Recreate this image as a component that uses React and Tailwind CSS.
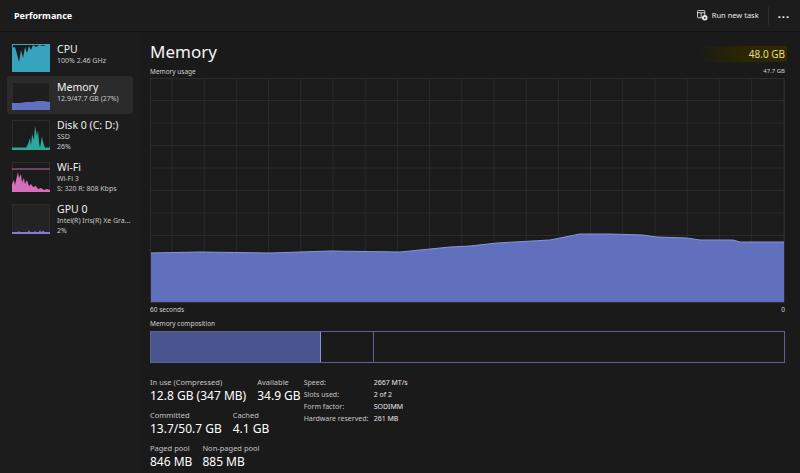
import React from 'react';

const font = { fontFamily: '"Noto Sans", "Open Sans", sans-serif' };

const CpuThumb = () => (
  <svg width="38" height="28" viewBox="0 0 38 28">
    <rect x="0.5" y="0.5" width="37" height="27" fill="#1b1b1b" stroke="#3aa6c0" strokeWidth="1" />
    <polygon
      points="0,4 3,3 5,10 7,18 9,6 11,14 13,3 15,9 17,2 19,6 21,1 24,3 27,1 31,2 34,1 38,1 38,28 0,28"
      fill="#37a3bd"
    />
  </svg>
);

const MemThumb = () => (
  <svg width="38" height="28" viewBox="0 0 38 28">
    <rect x="0.5" y="0.5" width="37" height="27" fill="#1e1e1e" stroke="#2c2c2c" strokeWidth="1" />
    <polygon points="0,21 8,21 14,20 20,20 26,19 31,19 38,20 38,28 0,28" fill="#6270c0" />
  </svg>
);

const DiskThumb = () => (
  <svg width="38" height="30" viewBox="0 0 38 30">
    <rect x="0.5" y="0.5" width="37" height="29" fill="#1b1b1b" stroke="#2b2b2b" strokeWidth="1" />
    <polygon
      points="0,28 14,28 16,24 18,18 19,26 20,14 22,20 23,6 25,16 26,10 27,22 28,28 30,16 31,22 33,28 38,28 38,30 0,30"
      fill="#2ea89b"
    />
    <line x1="0" y1="28" x2="38" y2="28" stroke="#2ea89b" strokeWidth="1" />
  </svg>
);

const WifiThumb = () => (
  <svg width="38" height="30" viewBox="0 0 38 30">
    <rect x="0.5" y="0.5" width="37" height="29" fill="#1b1b1b" stroke="#2b2b2b" strokeWidth="1" />
    <line x1="0" y1="7" x2="38" y2="7" stroke="#c06aa8" strokeWidth="1" />
    <polygon
      points="0,30 0,22 2,18 3,23 5,14 6,10 7,16 9,12 10,20 12,16 13,22 15,18 17,24 19,22 21,25 24,24 26,27 29,26 32,28 35,27 38,28 38,30"
      fill="#d46fba"
    />
  </svg>
);

const GpuThumb = () => (
  <svg width="38" height="30" viewBox="0 0 38 30">
    <rect x="0.5" y="0.5" width="37" height="29" fill="#232323" stroke="#2b2b2b" strokeWidth="1" />
    <polygon
      points="0,30 0,28 6,28 7,27 8,28 16,28 17,26 18,28 22,28 23,27 24,28 27,28 28,26 29,28 31,27 33,28 38,28 38,30"
      fill="#8a78d8"
    />
  </svg>
);

const items = [
  { name: 'CPU', lines: ['100% 2.46 GHz'], thumb: <CpuThumb /> },
  { name: 'Memory', lines: ['12.9/47.7 GB (27%)'], thumb: <MemThumb />, active: true },
  { name: 'Disk 0 (C: D:)', lines: ['SSD', '26%'], thumb: <DiskThumb /> },
  { name: 'Wi-Fi', lines: ['Wi-Fi 3', 'S: 320 R: 808 Kbps'], thumb: <WifiThumb /> },
  { name: 'GPU 0', lines: ['Intel(R) Iris(R) Xe Gra...', '2%'], thumb: <GpuThumb /> },
];

const W = 635;
const H = 225;
const pts = [
  [0, 175], [50, 174], [120, 175], [180, 173], [250, 174], [270, 172], [300, 169],
  [320, 168], [347, 165], [400, 162], [430, 156], [460, 156], [493, 157], [507, 159],
  [537, 160], [550, 162], [583, 162], [590, 164], [635, 164],
];

const UsageGraph = () => {
  const vlines = [];
  for (let x = 22; x < W; x += 32.2) vlines.push(x);
  const hlines = [];
  for (let i = 1; i < 10; i++) hlines.push(i * 22.5);
  const area = `0,${H} ` + pts.map((p) => p.join(',')).join(' ') + ` ${W},${H}`;
  const edge = pts.map((p) => p.join(',')).join(' ');
  return (
    <svg width={W} height={H} viewBox={`0 0 ${W} ${H}`} className="block">
      <rect x="0" y="0" width={W} height={H} fill="#1b1b1b" />
      {vlines.map((x) => (
        <line key={'v' + x} x1={x} y1="0" x2={x} y2={H} stroke="#2a2a2a" strokeWidth="1" />
      ))}
      {hlines.map((y) => (
        <line key={'h' + y} x1="0" y1={y} x2={W} y2={y} stroke="#2a2a2a" strokeWidth="1" />
      ))}
      <polygon points={area} fill="#6170bd" />
      <polyline points={edge} fill="none" stroke="#8894dc" strokeWidth="1" />
      <rect x="0.5" y="0.5" width={W - 1} height={H - 1} fill="none" stroke="#2c2c2c" strokeWidth="1" />
    </svg>
  );
};

const Stat = ({ label, value }) => (
  <div className="flex flex-col">
    <span className="text-[7.5px] leading-[10px] text-[#c4c4c4]">{label}</span>
    <span className="text-[12px] leading-[18px] text-white">{value}</span>
  </div>
);

export default function App() {
  return (
    <div style={font} className="w-[800px] h-[473px] bg-[#1c1c1c] text-white overflow-hidden flex flex-col">
      {/* header */}
      <div className="h-[32px] flex items-center border-b border-[#141414] pl-[14px] pr-[10px]">
        <span className="text-[9px] font-bold">Performance</span>
        <div className="ml-auto flex items-center">
          <svg width="11" height="11" viewBox="0 0 12 12" className="mr-[4px]">
            <rect x="0.5" y="0.5" width="8" height="8" rx="1" fill="none" stroke="#e6e6e6" strokeWidth="1" />
            <line x1="0.5" y1="3" x2="8.5" y2="3" stroke="#e6e6e6" strokeWidth="1" />
            <line x1="4.5" y1="3" x2="4.5" y2="8.5" stroke="#e6e6e6" strokeWidth="1" />
            <circle cx="8.5" cy="8.5" r="3" fill="#e6e6e6" />
            <circle cx="8.5" cy="8.5" r="1" fill="#1c1c1c" />
          </svg>
          <span className="text-[7.5px] text-[#e6e6e6]">Run new task</span>
          <div className="w-px h-[18px] bg-[#2e2e2e] mx-[9px]" />
          <span className="text-[11px] font-bold tracking-[1px] leading-none pb-[4px]">...</span>
        </div>
      </div>

      <div className="flex flex-1 min-h-0">
        {/* sidebar */}
        <div className="w-[140px] px-[7px] pt-[6px] flex flex-col">
          {items.map((it) => (
            <div
              key={it.name}
              className={`flex items-start gap-[7px] pl-[5px] py-[4px] rounded-[3px] ${it.active ? 'bg-[#2b2b2b]' : ''}`}
            >
              <div className="shrink-0 pt-[2px]">{it.thumb}</div>
              <div className="flex flex-col min-w-0">
                <span className="text-[10.5px] leading-[14px] text-[#f0f0f0]">{it.name}</span>
                {it.lines.map((l) => (
                  <span key={l} className="text-[7px] leading-[10px] text-[#c8c8c8] whitespace-nowrap">{l}</span>
                ))}
              </div>
            </div>
          ))}
        </div>

        {/* main */}
        <div className="flex-1 bg-[#1a1a1a] pl-[10px] pr-[15px] pt-[8px] flex flex-col">
          <div className="flex items-center justify-between h-[24px]">
            <span className="text-[17px] leading-[24px] text-[#f4f4f4]">Memory</span>
            <span className="text-[10px] leading-[16px] text-[#e8dc8a] pl-[50px] pr-[2px] -mr-[2px] mt-[4px] bg-gradient-to-r from-transparent via-[#2c2700] to-[#2e2900]">
              48.0 GB
            </span>
          </div>
          <div className="flex justify-between items-end h-[14px] pb-[2px]">
            <span className="text-[6.5px] leading-[9px] text-[#cfcfcf]">Memory usage</span>
            <span className="text-[6px] leading-[9px] text-[#cfcfcf]">47.7 GB</span>
          </div>
          <UsageGraph />
          <div className="flex justify-between h-[14px] items-center">
            <span className="text-[6.5px] text-[#cfcfcf]">60 seconds</span>
            <span className="text-[6.5px] text-[#cfcfcf]">0</span>
          </div>
          <div className="h-[13px] flex items-center">
            <span className="text-[6.5px] text-[#cfcfcf]">Memory composition</span>
          </div>
          <div className="h-[32px] flex border border-[#5d6290] mt-[1px]">
            <div className="w-[170px] bg-[#4a5590] border-r border-[#8a93d0]" />
            <div className="w-[53px] border-r border-[#5d6290]" />
            <div className="flex-1" />
          </div>

          <div className="flex mt-[14px]">
            <div className="flex flex-col gap-[5px]">
              <div className="flex gap-[11px]">
                <Stat label="In use (Compressed)" value="12.8 GB (347 MB)" />
                <Stat label="Available" value="34.9 GB" />
              </div>
              <div className="flex gap-[11px]">
                <Stat label="Committed" value="13.7/50.7 GB" />
                <Stat label="Cached" value="4.1 GB" />
              </div>
              <div className="flex gap-[10px]">
                <Stat label="Paged pool" value="846 MB" />
                <Stat label="Non-paged pool" value="885 MB" />
              </div>
            </div>
            <div className="pl-[3px]">
              <div className="grid grid-cols-[70px_auto] text-[7px] leading-[12px] text-[#c4c4c4]">
                <span>Speed:</span><span className="text-[#e6e6e6]">2667 MT/s</span>
                <span>Slots used:</span><span className="text-[#e6e6e6]">2 of 2</span>
                <span>Form factor:</span><span className="text-[#e6e6e6]">SODIMM</span>
                <span>Hardware reserved:</span><span className="text-[#e6e6e6]">261 MB</span>
              </div>
            </div>
          </div>
        </div>
      </div>
    </div>
  );
}
